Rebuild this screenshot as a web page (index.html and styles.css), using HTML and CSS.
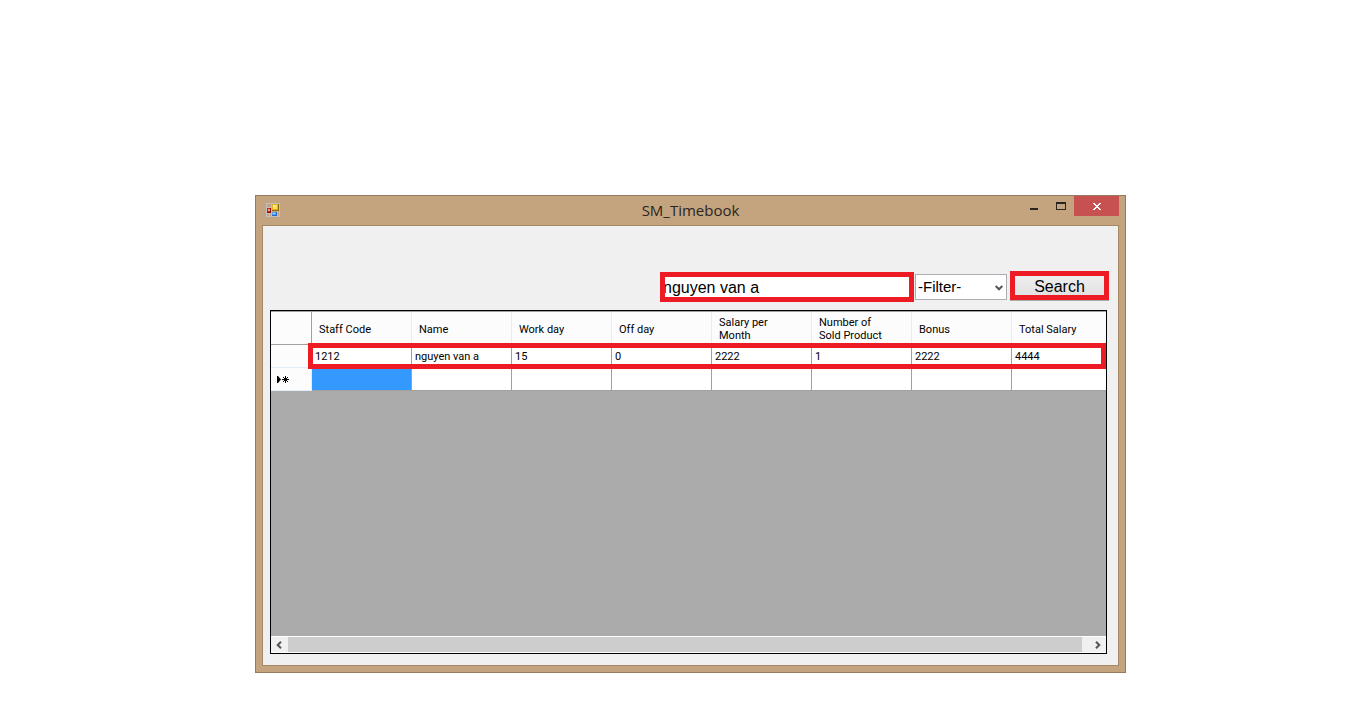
FILE: index.html
```html
<!DOCTYPE html>
<html lang="en">
<head>
<meta charset="utf-8">
<title>SM_Timebook</title>
<link rel="stylesheet" href="styles.css">
</head>
<body>
<main class="window">
  <header class="titlebar">
    <svg class="app-icon" width="14" height="14" viewBox="0 0 14 14" shape-rendering="crispEdges">
      <path fill="none" stroke="#c0c0c0" d="M.5 .5h13v13H.5zM5.500 0v14M0 4.500h5M0 10.500h5M3.500 10v4M11.500 8v5"/>
      <path fill="#8c0c0c" d="M1 5h4v5H1z"/><path fill="#d02020" d="M1 5h3v4H1z"/><path fill="#f0a090" d="M2 6h2v2H2z"/>
      <path fill="#8a6a08" d="M6 1h7v7H6z"/><path fill="#e8b020" d="M6 1h6v6H6z"/><path fill="#ffe060" d="M7 2h4v4H7z"/><path fill="#fff0a8" d="M7 2h2v2H7z"/>
      <path fill="#2868c8" d="M6 9h5v4H6z"/><path fill="#5c9cf0" d="M6 9h4v3H6z"/><path fill="#b0d4ff" d="M7 10h2v1H7z"/>
    </svg>
    <h1 class="title">SM_Timebook</h1>
    <div class="controls">
      <button class="control" type="button" aria-label="Minimize"><svg width="8" height="20" viewBox="0 0 8 20"><path fill="#2b2522" d="M0 12h8v2H0z"/></svg></button>
      <button class="control" type="button" aria-label="Maximize"><svg width="10" height="20" viewBox="0 0 10 20"><path fill="#2b2522" fill-rule="evenodd" d="M0 6h10v8H0zM1 8v5h8V8z"/></svg></button>
      <button class="control close" type="button" aria-label="Close"><svg width="8" height="20" viewBox="0 0 8 20" shape-rendering="crispEdges"><path fill="#fff" d="M0 7h2v1H0zM6 7h2v1H6zM1 8h2v1H1zM5 8h2v1H5zM2 9h4v1H2zM3 10h2v1H3zM2 11h4v1H2zM1 12h2v1H1zM5 12h2v1H5zM0 13h2v1H0zM6 13h2v1H6z"/></svg></button>
    </div>
  </header>
  <section class="client">
    <form class="search-row">
      <input class="query marked" type="text" value="nguyen van a" aria-label="Staff name">
      <div class="filter-wrap">
        <select class="filter" aria-label="Filter"><option>-Filter-</option></select>
        <svg class="filter-arrow" width="8" height="6" viewBox="0 0 8 6"><path fill="none" stroke="#555" stroke-width="2" d="M.7 1L4 4.300 7.300 1"/></svg>
      </div>
      <button class="search marked" type="button">Search</button>
    </form>
    <div class="grid">
      <div class="table-wrap">
        <table class="table">
          <thead>
            <tr><td class="corner"></td><th>Staff Code</th><th>Name</th><th>Work day</th><th>Off day</th><th>Salary per<br>Month</th><th>Number of<br>Sold Product</th><th>Bonus</th><th>Total Salary</th></tr>
          </thead>
          <tbody>
            <tr><td class="row-head"></td><td>1212</td><td>nguyen van a</td><td>15</td><td>0</td><td>2222</td><td>1</td><td>2222</td><td>4444</td></tr>
            <tr><td class="row-head"><svg class="marker" width="12" height="7" viewBox="0 0 12 7"><path d="M0 0h1l3 3.500L1 7H0z"/><path fill="none" stroke="#000" d="M8.500 0v7M5 3.500h7M6 1l5 5M11 1L6 6"/></svg></td><td class="selected"></td><td></td><td></td><td></td><td></td><td></td><td></td><td></td></tr>
          </tbody>
        </table>
        <div class="row-mark"></div>
      </div>
      <div class="scrollbar">
        <button class="scroll-button" type="button" aria-label="Scroll left"><svg width="6" height="8" viewBox="0 0 6 8"><path fill="none" stroke="#555" stroke-width="2" d="M5 .7L1.700 4 5 7.300"/></svg></button>
        <div class="thumb"></div>
        <button class="scroll-button right" type="button" aria-label="Scroll right"><svg width="6" height="8" viewBox="0 0 6 8"><path fill="none" stroke="#555" stroke-width="2" d="M1 .7L4.300 4 1 7.300"/></svg></button>
      </div>
    </div>
  </section>
</main>
</body>
</html>
```
FILE: styles.css
```css
* {
  box-sizing: border-box;
}

body {
  display: flex;
  min-height: 100vh;
  margin: 0;
  padding: 195px 234px 47px 255px;
  background: #fff;
  font-family: "Liberation Sans", Arial, sans-serif;
  color: #000;
}

button {
  padding: 0;
  border: 0;
  background: none;
}

.window {
  display: flex;
  flex: 1;
  flex-direction: column;
  min-width: 0;
  padding: 0 6px 6px;
  border: 1px solid #967b60;
  background: #c4a47e;
}

.titlebar {
  display: grid;
  grid-template-columns: 1fr auto 1fr;
  height: 29px;
}

.app-icon {
  margin: 7px 0 0 4px;
}

.title {
  margin: 0;
  font: 15px/28px "Open Sans", "Noto Sans", sans-serif;
  color: #2b2522;
}

.controls {
  display: flex;
  justify-content: flex-end;
}

.control {
  display: flex;
  justify-content: center;
  width: 27px;
  height: 20px;
}

.close {
  width: 45px;
  background: #c75050;
}

.client {
  display: flex;
  flex: 1;
  flex-direction: column;
  padding: 45px 11px 11px 7px;
  border: 1px solid #a58866;
  background: #f0f0f0;
}

.search-row {
  display: flex;
  justify-content: flex-end;
  align-items: center;
  height: 31px;
  margin-right: -2px;
}

.marked {
  border: 5px solid #ed1c24;
}

.query {
  width: 254px;
  height: 30px;
  padding: 2px 0 0;
  background: #fff;
  outline: 0;
  font: 16px/18px "Liberation Sans", Arial, sans-serif;
  color: #000;
  text-indent: -2px;
}

.filter-wrap {
  position: relative;
  margin: 0 3px 0 1px;
}

.filter {
  display: block;
  width: 92px;
  height: 26px;
  padding: 0 2px;
  border: 1px solid #abadb3;
  border-radius: 0;
  appearance: none;
  background: #fff;
  font: 15px/22px "Liberation Sans", Arial, sans-serif;
  color: #000;
}

.filter-arrow {
  position: absolute;
  top: 11px;
  right: 4px;
  pointer-events: none;
}

.search {
  width: 99px;
  height: 29px;
  margin-bottom: 2px;
  padding-top: 2px;
  background: linear-gradient(#eee, #e2e2e2);
  box-shadow: 0 1px #acacac;
  font: 16px/18px "Liberation Sans", Arial, sans-serif;
  color: #000;
}

.grid {
  display: flex;
  flex: 1;
  flex-direction: column;
  margin-top: 8px;
  border: 1px solid #000;
  background: #ababab;
}

.table-wrap {
  position: relative;
  flex: 1;
}

.table {
  width: 100%;
  border-spacing: 0;
  border-top: 1px solid #a0a0a0;
  table-layout: fixed;
  font: 11px/13px Roboto, sans-serif;
}

.table th,
.table td {
  height: 23px;
  padding: 1px 0 0 3px;
  border-right: 1px solid #a0a0a0;
  border-bottom: 1px solid #a0a0a0;
  background: #fff;
  text-align: left;
  white-space: nowrap;
}

.table th {
  width: 100px;
  height: 33px;
  padding: 2px 0 0 7px;
  border-right-color: #e3edf7;
  background: #fcfcfc;
  font-weight: 400;
}

.table th:last-child,
.table td:last-child {
  width: auto;
  border-right: 0;
}

.table .corner {
  width: 41px;
  background: #fcfcfc;
}

.table .row-head {
  padding: 0 0 0 6px;
  border-color: #e3edf7;
  background: #fcfcfc;
}

.table .selected {
  background: #3399ff;
}

.marker {
  display: block;
}

.row-mark {
  position: absolute;
  top: 32px;
  right: 0;
  left: 37px;
  height: 26px;
  border: 5px solid #ed1c24;
}

.scrollbar {
  display: flex;
  height: 17px;
  border-top: 1px solid #fff;
  border-bottom: 1px solid #fff;
  background: #f0f0f0;
}

.scroll-button {
  display: flex;
  align-items: center;
  justify-content: center;
  width: 17px;
  padding-right: 1px;
}

.scroll-button.right {
  width: 24px;
  padding: 0 0 0 7px;
}

.thumb {
  flex: 1;
  background: #cdcdcd;
}
```
